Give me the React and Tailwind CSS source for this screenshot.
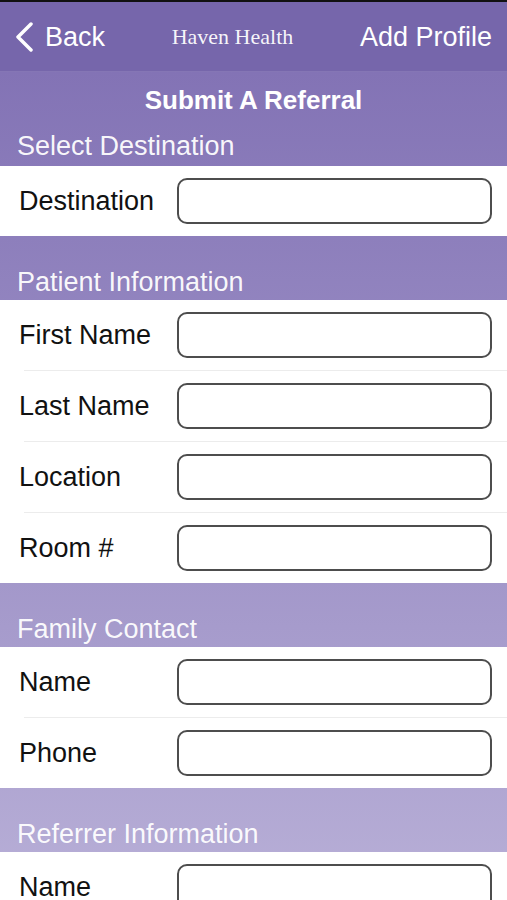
import React from 'react';

const sections = [
  { title: 'Patient Information', fields: ['First Name', 'Last Name', 'Location', 'Room #'] },
  { title: 'Family Contact', fields: ['Name', 'Phone'] },
  { title: 'Referrer Information', fields: ['Name'] },
];

const Field = ({ label }) => (
  <div className="h-[70px] flex items-center">
    <span className="w-[177px] pl-[19px] text-[27px] text-[#111] leading-[30px]">{label}</span>
    <div className="flex-1 mr-[15px] h-[46px] rounded-[10px] border-2 border-[#4d4d4d] bg-white" />
  </div>
);

const FieldGroup = ({ fields }) => (
  <div className="bg-white">
    {fields.map((f, i) => (
      <React.Fragment key={f + i}>
        {i > 0 && <div className="h-px ml-[24px] bg-[#ececec]" />}
        <Field label={f} />
      </React.Fragment>
    ))}
  </div>
);

const SectionHeader = ({ children, className = 'h-[64px] pb-[3px]' }) => (
  <div className={`flex items-end pl-[17px] ${className}`}>
    <span className="text-[27px] leading-[30px] text-white/95">{children}</span>
  </div>
);

export default function App() {
  return (
    <div className="h-[900px] w-full overflow-hidden flex flex-col font-['Liberation_Sans',Arial,sans-serif]">
      <div className="h-[2px] bg-[#111]" />
      <header className="h-[70px] bg-[#7666ab] border-b border-[#8576b5] flex items-center justify-between pl-[14px] pr-[15px] text-white">
        <button className="flex items-center gap-[11px]">
          <svg width="20" height="30" viewBox="0 0 20 30" fill="none">
            <path d="M17 2 L4 15 L17 28" stroke="white" strokeWidth="3.5" strokeLinecap="round" strokeLinejoin="round" />
          </svg>
          <span className="text-[27px] leading-[30px]">Back</span>
        </button>
        <span className="font-['Liberation_Serif','Times_New_Roman',serif] text-[22px] text-white/95">Haven Health</span>
        <span className="text-[27px] leading-[30px]">Add Profile</span>
      </header>
      <main className="flex-1 overflow-hidden bg-gradient-to-b from-[#8373b5] to-[#b8afd7]">
        <div className="h-[56px] flex items-center justify-center">
          <h1 className="text-[26px] font-bold text-white">Submit A Referral</h1>
        </div>
        <SectionHeader className="h-[38px] pb-[5px]">Select Destination</SectionHeader>
        <FieldGroup fields={['Destination']} />
        {sections.map((s) => (
          <div key={s.title}>
            <SectionHeader>{s.title}</SectionHeader>
            <FieldGroup fields={s.fields} />
          </div>
        ))}
      </main>
    </div>
  );
}
